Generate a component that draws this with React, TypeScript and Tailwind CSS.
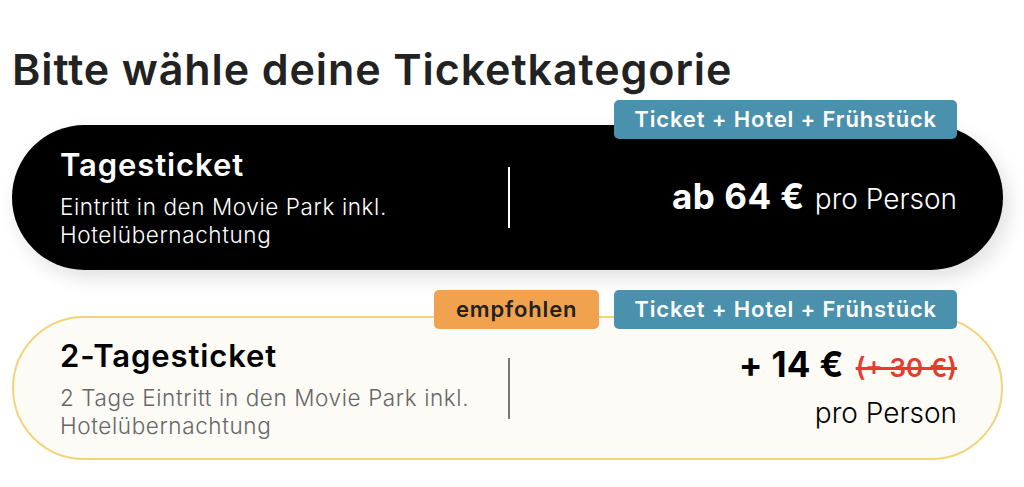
const font = "font-['Inter','Liberation_Sans',sans-serif]";

function Badge({ label, tone }: { label: string; tone: "blue" | "orange" }) {
  return (
    <span
      className={
        "h-[39px] flex items-center rounded-[5px] text-[22px] font-semibold tracking-[0.85px] " +
        (tone === "blue" ? "px-[20px] bg-[#4991ac] text-white" : "px-[22px] bg-[#f0a24f] text-[#222]")
      }
    >
      {label}
    </span>
  );
}

export default function App() {
  return (
    <div className={`${font} bg-white w-[1024px] h-[487px] pl-[12px] pr-[21px] pt-[43px] overflow-hidden`}>
      <h1 className="text-[43px] leading-[52px] font-semibold text-[#222] tracking-[0.9px]">
        Bitte wähle deine Ticketkategorie
      </h1>

      {/* Tagesticket */}
      <div className="mt-[5px] flex flex-col">
        <div className="relative z-10 flex justify-end pr-[46px] -mb-[14px]">
          <Badge label="Ticket + Hotel + Frühstück" tone="blue" />
        </div>
        <div className="h-[145px] rounded-full bg-black grid grid-cols-2 items-center shadow-[6px_8px_20px_rgba(0,0,0,0.12)]">
          <div className="pl-[48px] flex justify-between items-center h-full">
            <div className="text-white">
              <div className="text-[31px] leading-[38px] font-semibold tracking-[0.9px]">Tagesticket</div>
              <div className="mt-[9px] text-[22.5px] leading-[28px] font-light tracking-[0.6px] w-[420px]">
                Eintritt in den Movie Park inkl. Hotelübernachtung
              </div>
            </div>
            <div className="w-[2px] h-[61px] bg-white -mr-[2px]" />
          </div>
          <div className="pr-[46px] flex justify-end items-baseline gap-[10px] text-white -mt-[3px]">
            <span className="text-[35px] font-bold tracking-[0.5px]">ab 64 €</span>
            <span className="text-[28px] font-light">pro Person</span>
          </div>
        </div>
      </div>

      {/* 2-Tagesticket */}
      <div className="mt-[20px] flex flex-col">
        <div className="relative z-10 flex justify-end gap-[15px] pr-[46px] -mb-[13px]">
          <Badge label="empfohlen" tone="orange" />
          <Badge label="Ticket + Hotel + Frühstück" tone="blue" />
        </div>
        <div className="h-[144px] rounded-full bg-[#fcfbf6] border-2 border-[#f2d47d] grid grid-cols-2 items-center">
          <div className="pl-[46px] flex justify-between items-center h-full">
            <div>
              <div className="text-[31px] leading-[38px] font-semibold tracking-[0.9px] text-black">2-Tagesticket</div>
              <div className="mt-[9px] text-[22.5px] leading-[28px] font-light tracking-[0.6px] text-[#666] w-[430px]">
                2 Tage Eintritt in den Movie Park inkl. Hotelübernachtung
              </div>
            </div>
            <div className="w-[2px] h-[61px] bg-[#777] -mr-[2px]" />
          </div>
          <div className="pr-[44px] flex flex-col items-end -mt-[8px]">
            <div className="flex items-baseline gap-[12px]">
              <span className="text-[35px] font-bold tracking-[0.3px] text-black">+ 14 €</span>
              <span className="text-[26px] font-semibold text-[#e63b2e] line-through decoration-[2.5px]">(+ 30 €)</span>
            </div>
            <span className="mt-[5px] text-[28px] leading-[34px] font-light text-black">pro Person</span>
          </div>
        </div>
      </div>
    </div>
  );
}
